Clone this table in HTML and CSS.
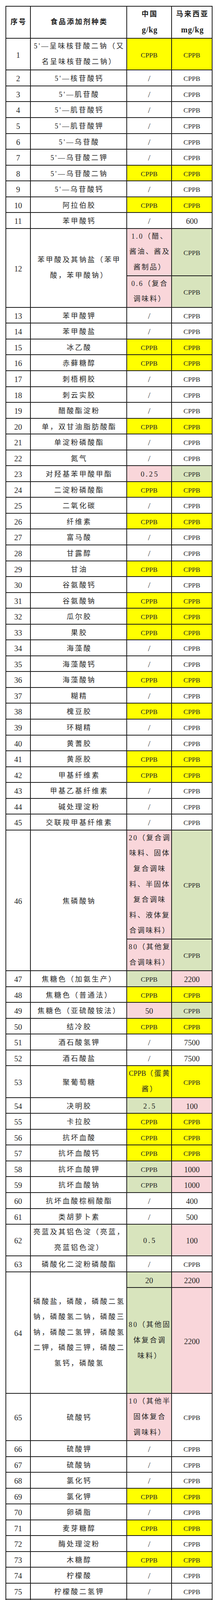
FILE: index.html
```html
<!DOCTYPE html>
<html lang="zh-CN">
<head>
<meta charset="utf-8">
<title>食品添加剂对比</title>
<link rel="stylesheet" href="styles.css">
</head>
<body>
<div class="page">
<table class="tb">
<colgroup><col class="c1"><col class="c2"><col class="c3"><col class="c4"></colgroup>
<tr class="hd"><th>序号</th><th>食品添加剂种类</th><th>中国<br><span class="u">g/kg</span></th><th>马来西亚<br><span class="u">mg/kg</span></th></tr>
<tr><td class="n">1</td><td class="t m">5'—呈味核苷酸二钠（又<br>名呈味核苷酸二钠）</td><td class="v y">CPPB</td><td class="v y">CPPB</td></tr>
<tr><td class="n">2</td><td class="t">5'—核苷酸钙</td><td class="v s">/</td><td class="v">CPPB</td></tr>
<tr><td class="n">3</td><td class="t">5'—肌苷酸</td><td class="v s">/</td><td class="v">CPPB</td></tr>
<tr><td class="n">4</td><td class="t">5'—肌苷酸钙</td><td class="v s">/</td><td class="v">CPPB</td></tr>
<tr><td class="n">5</td><td class="t">5'—肌苷酸钾</td><td class="v s">/</td><td class="v">CPPB</td></tr>
<tr><td class="n">6</td><td class="t">5'—乌苷酸</td><td class="v s">/</td><td class="v">CPPB</td></tr>
<tr><td class="n">7</td><td class="t">5'—乌苷酸二钾</td><td class="v s">/</td><td class="v">CPPB</td></tr>
<tr><td class="n">8</td><td class="t">5'—乌苷酸二钠</td><td class="v y">CPPB</td><td class="v y">CPPB</td></tr>
<tr><td class="n">9</td><td class="t">5'—乌苷酸钙</td><td class="v s">/</td><td class="v">CPPB</td></tr>
<tr><td class="n">10</td><td class="t">阿拉伯胶</td><td class="v y">CPPB</td><td class="v y">CPPB</td></tr>
<tr><td class="n">11</td><td class="t">苯甲酸钙</td><td class="v s">/</td><td class="v d">600</td></tr>
<tr><td class="n" rowspan="2">12</td><td class="t m" rowspan="2">苯甲酸及其钠盐（苯甲<br>酸，苯甲酸钠）</td><td class="v p vm m">1.0（醋、<br>酱油、酱及<br>酱制品）</td><td class="v g">CPPB</td></tr>
<tr><td class="v p vm m">0.6（复合<br>调味料）</td><td class="v g">CPPB</td></tr>
<tr><td class="n">13</td><td class="t">苯甲酸钾</td><td class="v s">/</td><td class="v">CPPB</td></tr>
<tr><td class="n">14</td><td class="t">苯甲酸盐</td><td class="v s">/</td><td class="v">CPPB</td></tr>
<tr><td class="n">15</td><td class="t">冰乙酸</td><td class="v y">CPPB</td><td class="v y">CPPB</td></tr>
<tr><td class="n">16</td><td class="t">赤藓糖醇</td><td class="v y">CPPB</td><td class="v y">CPPB</td></tr>
<tr><td class="n">17</td><td class="t">刺梧桐胶</td><td class="v s">/</td><td class="v">CPPB</td></tr>
<tr><td class="n">18</td><td class="t">刺云实胶</td><td class="v s">/</td><td class="v">CPPB</td></tr>
<tr><td class="n">19</td><td class="t">醋酸酯淀粉</td><td class="v s">/</td><td class="v">CPPB</td></tr>
<tr><td class="n">20</td><td class="t">单，双甘油脂肪酸酯</td><td class="v y">CPPB</td><td class="v y">CPPB</td></tr>
<tr><td class="n">21</td><td class="t">单淀粉磷酸酯</td><td class="v s">/</td><td class="v">CPPB</td></tr>
<tr><td class="n">22</td><td class="t">氮气</td><td class="v s">/</td><td class="v">CPPB</td></tr>
<tr><td class="n">23</td><td class="t">对羟基苯甲酸甲酯</td><td class="v p dec">0.25</td><td class="v g">CPPB</td></tr>
<tr><td class="n">24</td><td class="t">二淀粉磷酸酯</td><td class="v y">CPPB</td><td class="v y">CPPB</td></tr>
<tr><td class="n">25</td><td class="t">二氧化碳</td><td class="v s">/</td><td class="v">CPPB</td></tr>
<tr><td class="n">26</td><td class="t">纤维素</td><td class="v y">CPPB</td><td class="v y">CPPB</td></tr>
<tr><td class="n">27</td><td class="t">富马酸</td><td class="v s">/</td><td class="v">CPPB</td></tr>
<tr><td class="n">28</td><td class="t">甘露醇</td><td class="v s">/</td><td class="v">CPPB</td></tr>
<tr><td class="n">29</td><td class="t">甘油</td><td class="v y">CPPB</td><td class="v y">CPPB</td></tr>
<tr><td class="n">30</td><td class="t">谷氨酸钙</td><td class="v s">/</td><td class="v">CPPB</td></tr>
<tr><td class="n">31</td><td class="t">谷氨酸钠</td><td class="v y">CPPB</td><td class="v y">CPPB</td></tr>
<tr><td class="n">32</td><td class="t">瓜尔胶</td><td class="v y">CPPB</td><td class="v y">CPPB</td></tr>
<tr><td class="n">33</td><td class="t">果胶</td><td class="v y">CPPB</td><td class="v y">CPPB</td></tr>
<tr><td class="n">34</td><td class="t">海藻酸</td><td class="v s">/</td><td class="v">CPPB</td></tr>
<tr><td class="n">35</td><td class="t">海藻酸钙</td><td class="v s">/</td><td class="v">CPPB</td></tr>
<tr><td class="n">36</td><td class="t">海藻酸钠</td><td class="v y">CPPB</td><td class="v y">CPPB</td></tr>
<tr><td class="n">37</td><td class="t">糊精</td><td class="v s">/</td><td class="v">CPPB</td></tr>
<tr><td class="n">38</td><td class="t">槐豆胶</td><td class="v y">CPPB</td><td class="v y">CPPB</td></tr>
<tr><td class="n">39</td><td class="t">环糊精</td><td class="v s">/</td><td class="v">CPPB</td></tr>
<tr><td class="n">40</td><td class="t">黄蓍胶</td><td class="v s">/</td><td class="v">CPPB</td></tr>
<tr><td class="n">41</td><td class="t">黄原胶</td><td class="v y">CPPB</td><td class="v y">CPPB</td></tr>
<tr><td class="n">42</td><td class="t">甲基纤维素</td><td class="v y">CPPB</td><td class="v y">CPPB</td></tr>
<tr><td class="n">43</td><td class="t">甲基乙基纤维素</td><td class="v s">/</td><td class="v">CPPB</td></tr>
<tr><td class="n">44</td><td class="t">碱处理淀粉</td><td class="v s">/</td><td class="v">CPPB</td></tr>
<tr><td class="n">45</td><td class="t">交联羧甲基纤维素</td><td class="v s">/</td><td class="v">CPPB</td></tr>
<tr><td class="n" rowspan="2">46</td><td class="t" rowspan="2">焦磷酸钠</td><td class="v p vm m">20（复合调<br>味料、固体<br>复合调味<br>料、半固体<br>复合调味<br>料、液体复<br>合调味料）</td><td class="v g">CPPB</td></tr>
<tr><td class="v p vm m">80（其他复<br>合调味料）</td><td class="v g">CPPB</td></tr>
<tr><td class="n">47</td><td class="t">焦糖色（加氨生产）</td><td class="v g">CPPB</td><td class="v p d">2200</td></tr>
<tr><td class="n">48</td><td class="t">焦糖色（普通法）</td><td class="v y">CPPB</td><td class="v y">CPPB</td></tr>
<tr><td class="n">49</td><td class="t">焦糖色（亚硫酸铵法）</td><td class="v p d">50</td><td class="v g">CPPB</td></tr>
<tr><td class="n">50</td><td class="t">结冷胶</td><td class="v y">CPPB</td><td class="v y">CPPB</td></tr>
<tr><td class="n">51</td><td class="t">酒石酸氢钾</td><td class="v s">/</td><td class="v d">7500</td></tr>
<tr><td class="n">52</td><td class="t">酒石酸盐</td><td class="v s">/</td><td class="v d">7500</td></tr>
<tr><td class="n">53</td><td class="t">聚葡萄糖</td><td class="v y vm m"><span class="lat">CPPB</span>（蛋黄<br>酱）</td><td class="v y">CPPB</td></tr>
<tr><td class="n">54</td><td class="t">决明胶</td><td class="v g dec">2.5</td><td class="v p d">100</td></tr>
<tr><td class="n">55</td><td class="t">卡拉胶</td><td class="v y">CPPB</td><td class="v y">CPPB</td></tr>
<tr><td class="n">56</td><td class="t">抗坏血酸</td><td class="v y">CPPB</td><td class="v y">CPPB</td></tr>
<tr><td class="n">57</td><td class="t">抗坏血酸钙</td><td class="v y">CPPB</td><td class="v y">CPPB</td></tr>
<tr><td class="n">58</td><td class="t">抗坏血酸钾</td><td class="v g">CPPB</td><td class="v p d">1000</td></tr>
<tr><td class="n">59</td><td class="t">抗坏血酸钠</td><td class="v g">CPPB</td><td class="v p d">1000</td></tr>
<tr><td class="n">60</td><td class="t">抗坏血酸棕榈酸酯</td><td class="v s">/</td><td class="v d">400</td></tr>
<tr><td class="n">61</td><td class="t">类胡萝卜素</td><td class="v s">/</td><td class="v d">500</td></tr>
<tr><td class="n">62</td><td class="t m">亮蓝及其铝色淀（亮蓝，<br>亮蓝铝色淀）</td><td class="v g dec">0.5</td><td class="v p d">100</td></tr>
<tr><td class="n">63</td><td class="t">磷酸化二淀粉磷酸酯</td><td class="v s">/</td><td class="v">CPPB</td></tr>
<tr><td class="n" rowspan="2">64</td><td class="t m" rowspan="2">磷酸盐，磷酸，磷酸二氢<br>钠，磷酸氢二钠，磷酸三<br>钠，磷酸二氢钾，磷酸氢<br>二钾，磷酸三钾，磷酸二<br>氢钙，磷酸氢</td><td class="v g d">20</td><td class="v p d">2200</td></tr>
<tr class="r64"><td class="v g vm m">80（其他固<br>体复合调<br>味料）</td><td class="v p d">2200</td></tr>
<tr><td class="n">65</td><td class="t">硫酸钙</td><td class="v p vm m">10（其他半<br>固体复合<br>调味料）</td><td class="v">CPPB</td></tr>
<tr><td class="n">66</td><td class="t">硫酸钾</td><td class="v s">/</td><td class="v">CPPB</td></tr>
<tr><td class="n">67</td><td class="t">硫酸钠</td><td class="v s">/</td><td class="v">CPPB</td></tr>
<tr><td class="n">68</td><td class="t">氯化钙</td><td class="v s">/</td><td class="v">CPPB</td></tr>
<tr><td class="n">69</td><td class="t">氯化钾</td><td class="v y">CPPB</td><td class="v y">CPPB</td></tr>
<tr><td class="n">70</td><td class="t">卵磷脂</td><td class="v s">/</td><td class="v">CPPB</td></tr>
<tr><td class="n">71</td><td class="t">麦芽糖醇</td><td class="v y">CPPB</td><td class="v y">CPPB</td></tr>
<tr><td class="n">72</td><td class="t">酶处理淀粉</td><td class="v s">/</td><td class="v">CPPB</td></tr>
<tr><td class="n">73</td><td class="t">木糖醇</td><td class="v y">CPPB</td><td class="v y">CPPB</td></tr>
<tr><td class="n">74</td><td class="t">柠檬酸</td><td class="v s">/</td><td class="v">CPPB</td></tr>
<tr><td class="n">75</td><td class="t">柠檬酸二氢钾</td><td class="v s">/</td><td class="v">CPPB</td></tr>
<tr><td class="n">76</td><td class="t">柠檬酸二氢钠</td><td class="v s">/</td><td class="v">CPPB</td></tr>
<tr><td class="n">77</td><td class="t">柠檬酸三钙</td><td class="v s">/</td><td class="v">CPPB</td></tr>
<tr><td class="n">78</td><td class="t">柠檬酸三钾</td><td class="v s">/</td><td class="v">CPPB</td></tr>
<tr><td class="n">79</td><td class="t">柠檬酸三钠</td><td class="v s">/</td><td class="v">CPPB</td></tr>
<tr><td class="n">80</td><td class="t">柠檬酸脂肪酸甘油酯</td><td class="v y">CPPB</td><td class="v y">CPPB</td></tr>
<tr><td class="n">81</td><td class="t">偶氮玉红（酸性红）</td><td class="v s">/</td><td class="v d">500</td></tr>
<tr><td class="n">82</td><td class="t">漂白淀粉</td><td class="v s">/</td><td class="v d">30000</td></tr>
<tr><td class="n">83</td><td class="t">苹果酸</td><td class="v y">CPPB</td><td class="v y">CPPB</td></tr>
<tr><td class="n">84</td><td class="t">苹果酸钙</td><td class="v s">/</td><td class="v">CPPB</td></tr>
</table>

<table class="tb t2">
<colgroup><col class="c1"><col class="c2"><col class="c3"><col class="c4"></colgroup>
<tr><td class="n">85</td><td class="t">苹果酸钠</td><td class="v y">CPPB</td><td class="v y">CPPB</td></tr>
<tr><td class="n">86</td><td class="t">葡萄糖酸钙</td><td class="v s">/</td><td class="v">CPPB</td></tr>
<tr><td class="n">87</td><td class="t">葡萄糖酸钾</td><td class="v s">/</td><td class="v">CPPB</td></tr>
<tr><td class="n">88</td><td class="t">葡萄糖酸钠</td><td class="v y">CPPB</td><td class="v y">CPPB</td></tr>
<tr><td class="n">89</td><td class="t">羟丙基淀粉</td><td class="v y">CPPB</td><td class="v y">CPPB</td></tr>
<tr><td class="n">90</td><td class="t">羟丙基二淀粉磷酸酯</td><td class="v y">CPPB</td><td class="v y">CPPB</td></tr>
<tr><td class="n">91</td><td class="t">羟丙基甲基纤维素</td><td class="v y">CPPB</td><td class="v y">CPPB</td></tr>
<tr><td class="n">92</td><td class="t">羟丙基纤维素</td><td class="v s">/</td><td class="v">CPPB</td></tr>
<tr><td class="n">93</td><td class="t">氢氧化钙</td><td class="v s">/</td><td class="v">CPPB</td></tr>
<tr><td class="n">94</td><td class="t">氢氧化钾</td><td class="v s">/</td><td class="v">CPPB</td></tr>
<tr><td class="n">95</td><td class="t">氢氧化镁</td><td class="v s">/</td><td class="v d">3125</td></tr>
<tr><td class="n">96</td><td class="t">琼脂</td><td class="v y">CPPB</td><td class="v y">CPPB</td></tr>
<tr><td class="n" rowspan="2">97</td><td class="t" rowspan="2">日落黄及其铝色淀</td><td class="v p vm m">0.2（固体<br>复合调味<br>料、液体复<br>合调味料）</td><td class="v g d">300</td></tr>
<tr><td class="v y vm m">0.3（半固<br>体复合调<br>味料）</td><td class="v y d">300</td></tr>
<tr><td class="n">98</td><td class="t">肉豆蔻</td><td class="v s">/</td><td class="v">CPPB</td></tr>
<tr><td class="n">99</td><td class="t">乳酸钙</td><td class="v p d">10</td><td class="v g">CPPB</td></tr>
<tr><td class="n">100</td><td class="t">乳酸钾</td><td class="v y">CPPB</td><td class="v y">CPPB</td></tr>
<tr><td class="n">101</td><td class="t">乳酸钠</td><td class="v y">CPPB</td><td class="v y">CPPB</td></tr>
<tr><td class="n">102</td><td class="t">乳酸脂肪酸甘油酯</td><td class="v y">CPPB</td><td class="v y">CPPB</td></tr>
<tr><td class="n">103</td><td class="t">乳糖醇</td><td class="v y">CPPB</td><td class="v y">CPPB</td></tr>
<tr><td class="n">104</td><td class="t">三氯蔗糖</td><td class="v p dec">0.25</td><td class="v g">CPPB</td></tr>
<tr><td class="n">105</td><td class="t">三乙酸甘油酯</td><td class="v s">/</td><td class="v">CPPB</td></tr>
<tr><td class="n">106</td><td class="t">山梨糖醇</td><td class="v y">CPPB</td><td class="v y">CPPB</td></tr>
<tr><td class="n">107</td><td class="t">生育酚</td><td class="v y">CPPB</td><td class="v y">CPPB</td></tr>
<tr><td class="n">108</td><td class="t">酸处理淀粉</td><td class="v y">CPPB</td><td class="v y">CPPB</td></tr>
<tr><td class="n">109</td><td class="t">羧甲基纤维素钠</td><td class="v y">CPPB</td><td class="v y">CPPB</td></tr>
<tr><td class="n">110</td><td class="t">碳酸钙</td><td class="v y">CPPB</td><td class="v y">CPPB</td></tr>
<tr><td class="n">111</td><td class="t">碳酸钾</td><td class="v y">CPPB</td><td class="v y">CPPB</td></tr>
<tr><td class="n">112</td><td class="t">碳酸镁</td><td class="v s">/</td><td class="v d">3125</td></tr>
<tr><td class="n">113</td><td class="t">碳酸钠</td><td class="v y">CPPB</td><td class="v y">CPPB</td></tr>
<tr><td class="n">114</td><td class="t">碳酸氢铵</td><td class="v y">CPPB</td><td class="v y">CPPB</td></tr>
<tr><td class="n">115</td><td class="t">碳酸氢钾</td><td class="v y">CPPB</td><td class="v y">CPPB</td></tr>
<tr><td class="n">116</td><td class="t">碳酸氢钠</td><td class="v y">CPPB</td><td class="v y">CPPB</td></tr>
<tr><td class="n">117</td><td class="t">甜味素</td><td class="v s">/</td><td class="v d">2000</td></tr>
<tr><td class="n">118</td><td class="t">甜菜红</td><td class="v y">CPPB</td><td class="v y">CPPB</td></tr>
<tr><td class="n">119</td><td class="t">甜菊糖苷</td><td class="v g dec">0.35</td><td class="v p d">30</td></tr>
<tr><td class="n">120</td><td class="t">微晶纤维素</td><td class="v y">CPPB</td><td class="v y">CPPB</td></tr>
<tr><td class="n">121</td><td class="t">亚铁氰化钾</td><td class="v p vm tight">0.01（盐）</td><td class="v g d">20</td></tr>
<tr><td class="n">122</td><td class="t">亚铁氰化钠</td><td class="v p vm tight">0.01（盐）</td><td class="v g d">20</td></tr>
<tr class="r123"><td class="n">123</td><td class="t">亚铁氰化物</td><td class="v s">/</td><td class="v d">20</td></tr>
<tr><td class="n" rowspan="2">124</td><td class="t" rowspan="2">胭脂虫红</td><td class="v g vm m">1（固体复<br>合调味料、<br>液体复合<br>调味料）</td><td class="v p d">500</td></tr>
<tr><td class="v p vm m">0.05（半固<br>体复合调<br>味料）</td><td class="v g d">500</td></tr>
<tr><td class="n">125</td><td class="t">氧化淀粉</td><td class="v">CPPB</td><td class="v d">30000</td></tr>
<tr><td class="n">126</td><td class="t">氧化钙</td><td class="v s">/</td><td class="v">CPPB</td></tr>
<tr><td class="n">127</td><td class="t">叶绿素</td><td class="v s">/</td><td class="v">CPPB</td></tr>
<tr><td class="n">128</td><td class="t">乙基纤维素</td><td class="v s">/</td><td class="v">CPPB</td></tr>
<tr><td class="n">129</td><td class="t">乙酸钙</td><td class="v s">/</td><td class="v">CPPB</td></tr>
<tr><td class="n">130</td><td class="t">乙酸和脂肪酸甘油酯</td><td class="v s">/</td><td class="v">CPPB</td></tr>
<tr><td class="n">131</td><td class="t">乙酸钠</td><td class="v p d">10</td><td class="v g">CPPB</td></tr>
<tr><td class="n">132</td><td class="t">乙酰化二淀粉磷酸酯</td><td class="v y">CPPB</td><td class="v y">CPPB</td></tr>
<tr><td class="n">133</td><td class="t">乙酰化双淀粉己二酸酯</td><td class="v y">CPPB</td><td class="v y">CPPB</td></tr>
<tr><td class="n">134</td><td class="t">乙酰化氧化淀粉</td><td class="v s">/</td><td class="v d">30000</td></tr>
<tr><td class="n">135</td><td class="t">异麦芽糖醇</td><td class="v s">/</td><td class="v">CPPB</td></tr>
<tr><td class="n">136</td><td class="t">油酸的钙、钾和钠盐</td><td class="v s">/</td><td class="v">CPPB</td></tr>
<tr><td class="n">137</td><td class="t">诱惑红及其铝色淀</td><td class="v g dec">0.5</td><td class="v p d">300</td></tr>
<tr><td class="n">138</td><td class="t">藻酸钾</td><td class="v y">CPPB</td><td class="v y">CPPB</td></tr>
<tr><td class="n">139</td><td class="t">DL-苹果酸氢钠</td><td class="v s">/</td><td class="v">CPPB</td></tr>
<tr><td class="n">140</td><td class="t">L—谷氨酸一钾</td><td class="v s">/</td><td class="v">CPPB</td></tr>
<tr><td class="n">141</td><td class="t">L—乳酸铵</td><td class="v s">/</td><td class="v">CPPB</td></tr>
<tr><td class="n">142</td><td class="t m">β—阿朴—8—胡萝卜素<br>醛</td><td class="v s">/</td><td class="v d">500</td></tr>
</table>
</div>
</body>
</html>
```
FILE: styles.css
```css
html, body {
  margin: 0;
  padding: 0;
  background: #ffffff;
}

.page {
  padding: 15px 0 18px 14px;
}

.tb {
  border-collapse: collapse;
  table-layout: fixed;
  width: 529px;
  color: #262626;
}

.t2 {
  margin-top: 31px;
}

.c1 { width: 63px; }
.c2 { width: 247px; }
.c3 { width: 115px; }
.c4 { width: 104px; }

.tb th,
.tb td {
  border: 2px solid #1b1b1b;
  padding: 4px 0 0;
  line-height: 34.55px;
  text-align: center;
  vertical-align: middle;
  white-space: nowrap;
  font-family: "Liberation Serif", "Noto Sans CJK SC", serif;
  font-weight: normal;
}

.hd th {
  padding: 0 0 0 3px;
  line-height: 39.6px;
  font-weight: bold;
  font-size: 18px;
  letter-spacing: 3px;
  color: #1e1e1e;
}

.hd .u {
  font-size: 20px;
  letter-spacing: 1px;
}

.n {
  font-size: 20px;
}

.t {
  font-size: 18px;
  letter-spacing: 3.4px;
  padding-left: 3.4px !important;
}

.v {
  font-size: 17.5px;
}

.d {
  font-size: 20px;
}

.dec {
  font-size: 19px;
  letter-spacing: 3.5px;
  padding-left: 3.5px !important;
}

.s {
  font-size: 22px;
  color: #3a3a3a;
  font-weight: 300;
}

.vm {
  font-size: 18px;
  letter-spacing: 3px;
  padding-left: 3px !important;
}

.vm .lat {
  letter-spacing: 0;
}

.tight {
  letter-spacing: 1.5px;
}

.tb td.m {
  line-height: 39.6px;
  padding-top: 0;
}

.y { background: #ffff00; }
.p { background: #f9d6da; }
.g { background: #d8e4bd; }

tr.r64 {
  height: 271px;
}

tr.r123 {
  height: 78px;
}
```
